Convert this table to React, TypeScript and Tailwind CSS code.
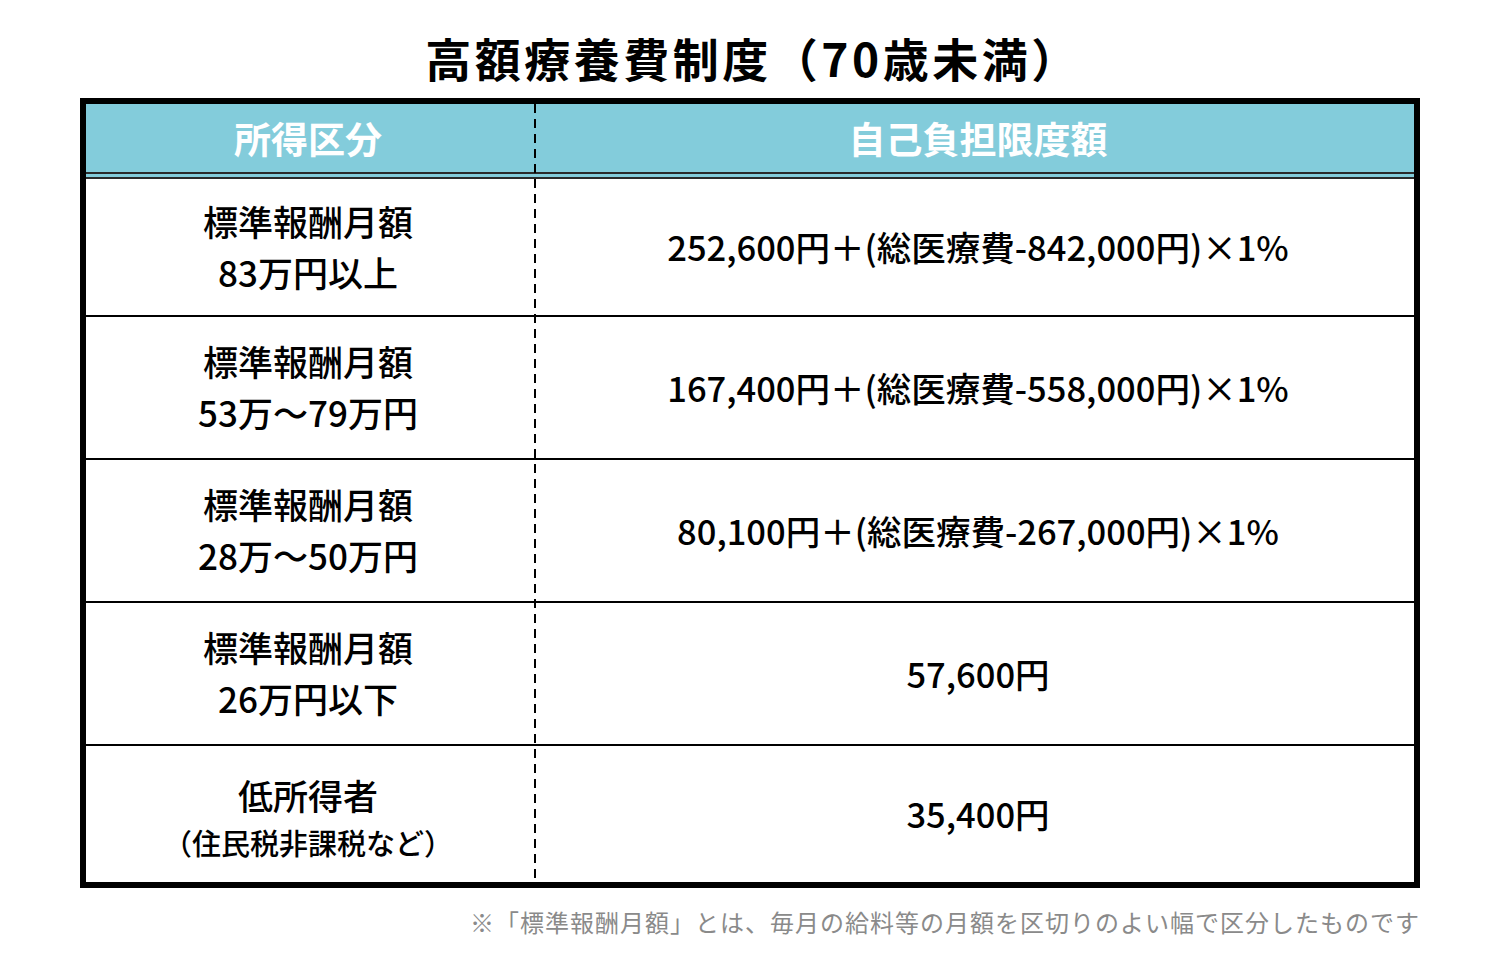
import React from "react";

const rows = [
  { left: ["標準報酬月額", "83万円以上"], right: "252,600円＋(総医療費-842,000円)×1%", h: "h-[136px]", first: true },
  { left: ["標準報酬月額", "53万～79万円"], right: "167,400円＋(総医療費-558,000円)×1%", h: "h-[143px]" },
  { left: ["標準報酬月額", "28万～50万円"], right: "80,100円＋(総医療費-267,000円)×1%", h: "h-[143px]" },
  { left: ["標準報酬月額", "26万円以下"], right: "57,600円", h: "h-[143px]" },
];

export default function App() {
  return (
    <div className="w-[1500px] h-[960px] bg-white flex flex-col items-center font-['Noto_Sans_CJK_JP',sans-serif] text-black">
      <div className="pt-[27px] h-[90px] text-[46px] leading-[60px] font-bold tracking-[3.5px] pl-[6px]">
        高額療養費制度（70歳未満）
      </div>
      <div className="mt-[8px] w-[1340px] border-[6px] border-black relative">
        <div className="flex h-[75px] bg-[#83ccdb] border-b-[7px] border-double border-[#2a2a2a] text-white text-[37px] font-bold">
          <div className="w-[448px] flex items-center justify-center leading-none pr-[4px]">所得区分</div>
          <div className="w-[2px]" />
          <div className="flex-1 flex items-center justify-center leading-none pl-[6px]">自己負担限度額</div>
        </div>
        {rows.map((r, i) => (
          <div key={i} className={`flex ${r.h} ${r.first ? "" : "border-t-2 border-black"}`}>
            <div className="w-[448px] flex flex-col items-center justify-center text-[35px] leading-[51px] font-medium pr-[4px] pb-[3px]">
              <div>{r.left[0]}</div>
              <div>{r.left[1]}</div>
            </div>
            <div className="w-[2px]" />
            <div className="flex-1 flex items-center justify-center text-[34.5px] font-medium pl-[6px]">{r.right}</div>
          </div>
        ))}
        <div className="flex h-[138px] border-t-2 border-black">
          <div className="w-[448px] flex flex-col items-center justify-center font-medium pr-[4px] pt-[8px]">
            <div className="text-[35px] leading-[48px]">低所得者</div>
            <div className="text-[29px] leading-[46px]">（住民税非課税など）</div>
          </div>
          <div className="w-[2px]" />
          <div className="flex-1 flex items-center justify-center text-[34.5px] font-medium pl-[6px]">35,400円</div>
        </div>
        <div className="absolute top-0 bottom-0 left-[448px] w-[2px] bg-[repeating-linear-gradient(to_bottom,#000_0px,#000_9px,transparent_9px,transparent_15px)]" />
      </div>
      <div className="w-[1340px] mt-[20px] text-right text-[24px] leading-[28px] text-[#8a8a8a] tracking-[1px]">
        ※「標準報酬月額」とは、毎月の給料等の月額を区切りのよい幅で区分したものです
      </div>
    </div>
  );
}
